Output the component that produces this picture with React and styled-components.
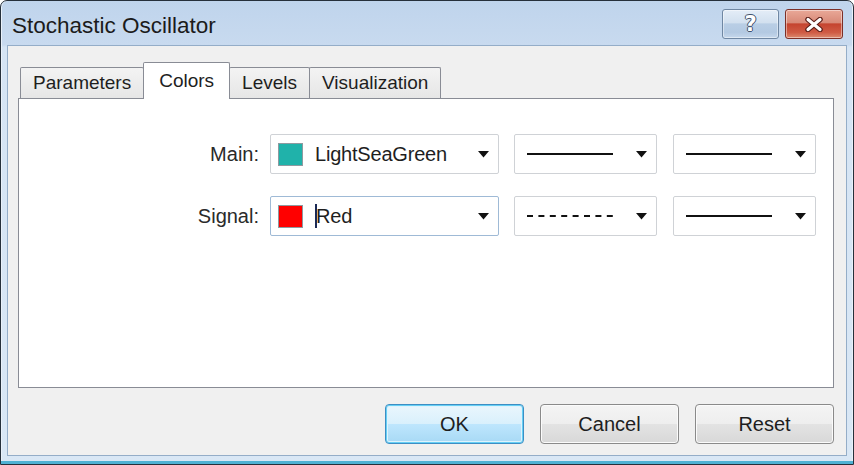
import styled, { createGlobalStyle } from "styled-components";

// Global page reset
const GlobalStyle = createGlobalStyle`
  html, body {
    margin: 0;
    padding: 0;
    background: #ffffff;
  }
  body {
    font-family: "Liberation Sans", Arial, sans-serif;
    color: #1e1e1e;
  }
`;

// Window frame
const Window = styled.div`
  width: 854px;
  height: 465px;
  box-sizing: border-box;
  border: 1px solid #26303b;
  border-radius: 7px 7px 0 0;
  background: linear-gradient(#bfd4ec, #c8daef 44px, #d5e4f4 46px, #d9e7f5);
  box-shadow: inset 0 -3px 0 #4fb1d3, inset 1px 0 0 #e9f1fa, inset -1px 0 0 #e9f1fa;
  display: flex;
  flex-direction: column;
  overflow: hidden;
`;

const TitleBar = styled.div`
  height: 44px;
  flex: none;
  display: flex;
  align-items: flex-start;
  padding: 0 10px 0 11px;
`;

const Title = styled.div`
  font-size: 22.5px;
  line-height: 22px;
  padding-top: 14px;
  flex: 1;
  color: #1b1b1b;
`;

const CaptionButtons = styled.div`
  display: flex;
  gap: 6px;
  margin-top: 8px;
`;

const CaptionButton = styled.div`
  width: ${(p) => p.$width}px;
  height: 30px;
  box-sizing: border-box;
  border-radius: 3px;
  display: flex;
  align-items: center;
  justify-content: center;
  border: 1px solid ${(p) => (p.$danger ? "#7d2f27" : "#6f87a3")};
  background: ${(p) =>
    p.$danger
      ? "linear-gradient(#e9a898, #d88a78 45%, #c5442f 50%, #cf5b44 80%, #dc8a6f)"
      : "linear-gradient(#e4edf7, #d2e0ef 45%, #b9cee5 50%, #b3c9e2 80%, #c6d8ec)"};
  box-shadow: inset 0 0 0 1px rgba(255, 255, 255, 0.45);
`;

const HelpMark = styled.span`
  font-family: "DejaVu Sans", sans-serif;
  font-weight: bold;
  font-size: 21px;
  line-height: 21px;
  color: #ffffff;
  text-shadow: 1px 0 0 #3f526b, -1px 0 0 #3f526b, 0 1px 0 #3f526b, 0 -1px 0 #3f526b;
`;

// Client area
const Client = styled.div`
  flex: 1;
  margin: 0 6px 8px 6px;
  border: 1px solid #94adc8;
  background: #f0f0f0;
  display: flex;
  flex-direction: column;
  padding: 16px 12px 11px 10px;
  min-height: 0;
`;

const TabStrip = styled.div`
  display: flex;
  align-items: flex-end;
  height: 36px;
  margin-left: 2px;
  flex: none;
`;

const Tab = styled.div`
  position: relative;
  box-sizing: border-box;
  height: ${(p) => (p.$active ? 37 : 31)}px;
  margin-bottom: ${(p) => (p.$active ? -1 : 0)}px;
  margin-right: -1px;
  padding: ${(p) => (p.$active ? "0 15px" : "0 12px")};
  border: 1px solid #898c95;
  border-bottom: none;
  border-radius: 2px 2px 0 0;
  background: ${(p) => (p.$active ? "#ffffff" : "linear-gradient(#f3f3f3, #e6e6e6)")};
  z-index: ${(p) => (p.$active ? 2 : 1)};
  display: flex;
  align-items: ${(p) => (p.$active ? "flex-start" : "center")};
  padding-top: ${(p) => (p.$active ? "7px" : "0")};
  font-size: 19px;
  line-height: 22px;
`;

const Panel = styled.div`
  flex: 1;
  border: 1px solid #898c95;
  background: #ffffff;
  padding-top: 35px;
  display: flex;
  flex-direction: column;
  gap: 22px;
`;

const Row = styled.div`
  display: flex;
  align-items: center;
  height: 40px;
`;

const Label = styled.div`
  width: 240px;
  text-align: right;
  font-size: 20px;
  color: #2a2a2a;
`;

const Combo = styled.div`
  width: ${(p) => p.$width}px;
  height: 40px;
  box-sizing: border-box;
  margin-left: ${(p) => p.$gap}px;
  border: 1px solid ${(p) => (p.$focused ? "#9fbad6" : "#cfd2d6")};
  border-radius: 2px;
  background: #ffffff;
  display: flex;
  align-items: center;
  padding: 0 9px 0 ${(p) => p.$padLeft || 7}px;
`;

const Swatch = styled.div`
  width: 25px;
  height: 23px;
  box-sizing: border-box;
  border: 1px solid #8e9aa0;
  background: ${(p) => p.$color};
  flex: none;
`;

const ComboText = styled.div`
  flex: 1;
  margin-left: 12px;
  font-size: 20px;
  letter-spacing: -0.2px;
  color: #1e1e1e;
  display: flex;
  align-items: center;
`;

const Caret = styled.span`
  width: 2px;
  height: 24px;
  background: #1b2a55;
  margin-right: -1px;
`;

const Spacer = styled.div`
  flex: 1;
`;

// Bottom buttons
const ButtonRow = styled.div`
  display: flex;
  justify-content: flex-end;
  gap: 16px;
  margin-top: 16px;
  flex: none;
`;

const Button = styled.div`
  width: 139px;
  height: 40px;
  box-sizing: border-box;
  border-radius: 4px;
  display: flex;
  align-items: center;
  justify-content: center;
  font-size: 20px;
  color: #1e1e1e;
  border: 1px solid ${(p) => (p.$default ? "#3d8ec4" : "#8a8a8a")};
  background: ${(p) =>
    p.$default
      ? "linear-gradient(#eaf6fd, #d9f0fc 50%, #bee6fd 51%, #a7d9f5)"
      : "linear-gradient(#f4f4f4, #eeeeee 50%, #e3e3e3 51%, #d8d8d8)"};
  box-shadow: ${(p) =>
    p.$default ? "inset 0 0 0 1px #66cff5, inset 0 0 0 2px #dff3fc" : "inset 0 0 0 1px #fbfbfb"};
`;

const Arrow = () => (
  <svg width="11" height="7" viewBox="0 0 11 7">
    <path d="M0 0 H11 L5.5 6.5 Z" fill="#111" />
  </svg>
);

const LineSample = ({ dashed }) => (
  <svg width="86" height="4" viewBox="0 0 86 4">
    <line
      x1="0"
      y1="2"
      x2="86"
      y2="2"
      stroke="#111"
      strokeWidth="2"
      strokeDasharray={dashed ? "6 5.4" : undefined}
    />
  </svg>
);

const CloseIcon = () => (
  <svg width="18" height="15" viewBox="0 0 18 15">
    <path d="M3 2.5 L15 12.5 M15 2.5 L3 12.5" stroke="#5a1d17" strokeWidth="5.5" strokeLinecap="round" />
    <path d="M3 2.5 L15 12.5 M15 2.5 L3 12.5" stroke="#ffffff" strokeWidth="3.2" strokeLinecap="round" />
  </svg>
);

const tabs = ["Parameters", "Colors", "Levels", "Visualization"];

const rows = [
  { label: "Main:", color: "#20b2aa", name: "LightSeaGreen", dashed: false },
  { label: "Signal:", color: "#ff0000", name: "Red", dashed: true, focused: true },
];

const App = () => {
  return (
    <>
      <GlobalStyle />
      <Window>
        <TitleBar>
          <Title>Stochastic Oscillator</Title>
          <CaptionButtons>
            <CaptionButton $width={57}>
              <HelpMark>?</HelpMark>
            </CaptionButton>
            <CaptionButton $width={58} $danger>
              <CloseIcon />
            </CaptionButton>
          </CaptionButtons>
        </TitleBar>
        <Client>
          <TabStrip>
            {tabs.map((t) => (
              <Tab key={t} $active={t === "Colors"}>
                {t}
              </Tab>
            ))}
          </TabStrip>
          <Panel>
            {rows.map((r) => (
              <Row key={r.label}>
                <Label>{r.label}</Label>
                <Combo $width={229} $gap={11} $focused={r.focused}>
                  <Swatch $color={r.color} />
                  <ComboText>
                    {r.focused && <Caret />}
                    {r.name}
                  </ComboText>
                  <Arrow />
                </Combo>
                <Combo $width={143} $gap={15} $padLeft={12}>
                  <LineSample dashed={r.dashed} />
                  <Spacer />
                  <Arrow />
                </Combo>
                <Combo $width={143} $gap={16} $padLeft={12}>
                  <LineSample />
                  <Spacer />
                  <Arrow />
                </Combo>
              </Row>
            ))}
          </Panel>
          <ButtonRow>
            <Button $default>OK</Button>
            <Button>Cancel</Button>
            <Button>Reset</Button>
          </ButtonRow>
        </Client>
      </Window>
    </>
  );
};

export default App;
